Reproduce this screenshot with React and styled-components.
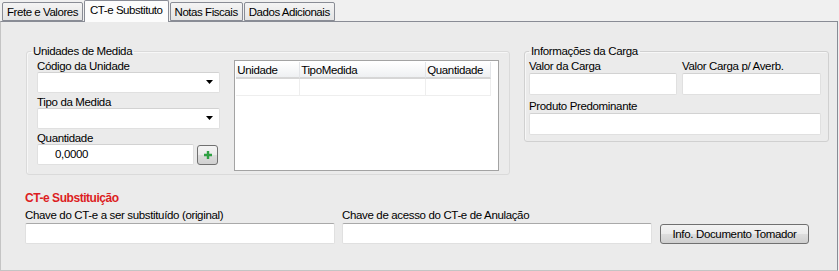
import React from "react";
import styled, { createGlobalStyle } from "styled-components";

const Global = createGlobalStyle`
  html, body { margin: 0; padding: 0; background: #f0f0f0; }
  body {
    font-family: "Liberation Sans", Arial, sans-serif;
    font-size: 11.5px;
    letter-spacing: -0.35px;
    color: #000;
  }
  * { box-sizing: border-box; }
`;

const Page = styled.div`
  width: 839px;
  height: 271px;
  overflow: hidden;
  display: flex;
  flex-direction: column;
`;

const TabBar = styled.div`
  display: flex;
  align-items: flex-start;
  gap: 1px;
  height: 21px;
  padding-left: 2px;
  position: relative;
  z-index: 2;
`;

const Tab = styled.div`
  margin-top: ${(p) => (p.$active ? 0 : 2)}px;
  height: ${(p) => (p.$active ? 22 : 19)}px;
  padding: 3px ${(p) => (p.$active ? 5 : 4)}px 0;
  line-height: 13px;
  letter-spacing: -0.45px;
  white-space: nowrap;
  border: 1px solid #898c95;
  border-bottom: ${(p) => (p.$active ? "none" : "1px solid #898c95")};
  border-radius: 2px 2px 0 0;
  background: ${(p) =>
    p.$active ? "#fcfcfc" : "linear-gradient(#f4f4f4, #e4e4e4)"};
`;

const Panel = styled.div`
  width: 838px;
  height: 250px;
  border: 1px solid #898c95;
  border-left-color: #c4c4c4;
  border-bottom-color: #c4c4c4;
  background: #ebebeb;
  padding: 22px 0 0 25px;
  position: relative;
  z-index: 1;
`;

const TopRow = styled.div`
  display: flex;
  align-items: flex-start;
  gap: 14px;
`;

const Group = styled.fieldset`
  margin: 0;
  width: ${(p) => p.$w}px;
  border: 1px solid ${(p) => (p.$faint ? "#dadada" : "#d0d0d0")};
  border-radius: 3px;
  box-shadow: inset 1px 1px 0 #f7f7f7;
  padding: ${(p) => p.$pad};
  min-inline-size: 0;
`;

const Legend = styled.legend`
  line-height: 14px;
  padding: 0 2px;
  margin-left: ${(p) => p.$shift}px;
`;

const LeftContent = styled.div`
  display: flex;
  align-items: flex-start;
  gap: 14px;
`;

const FieldStack = styled.div`
  display: flex;
  flex-direction: column;
  gap: ${(p) => p.$gap}px;
  width: ${(p) => (p.$w ? `${p.$w}px` : "auto")};
`;

const Field = styled.div`
  display: flex;
  flex-direction: column;
  gap: ${(p) => p.$gap || 0}px;
  width: ${(p) => (p.$w ? `${p.$w}px` : "auto")};
`;

const Label = styled.div`
  line-height: ${(p) => p.$lh || 12}px;
  height: ${(p) => p.$lh || 12}px;
  white-space: nowrap;
`;

const Input = styled.div`
  height: ${(p) => p.$h || 21}px;
  width: ${(p) => (p.$w ? `${p.$w}px` : "100%")};
  background: #fff;
  border: 1px solid #e0e0e0;
  border-top-color: ${(p) => (p.$edge ? "#a9a9a9" : "#d2d2d2")};
  border-radius: 2px;
  padding-left: ${(p) => p.$indent || 4}px;
  display: flex;
  align-items: center;
  line-height: 13px;
`;

const Select = styled(Input)`
  justify-content: flex-end;
  padding-right: 5px;
`;

const Row = styled.div`
  display: flex;
  align-items: flex-end;
  gap: ${(p) => p.$gap}px;
`;

const SmallButton = styled.button`
  width: 21px;
  height: 20px;
  padding: 0;
  border: 1px solid #707070;
  border-radius: 3px;
  background: linear-gradient(#f4f4f4 0%, #ebebeb 50%, #dcdcdc 51%, #d0d0d0 100%);
  display: flex;
  align-items: center;
  justify-content: center;
`;

const Table = styled.div`
  width: 266px;
  height: 111px;
  border: 1px solid #a3a3a3;
  padding: 1px;
  background: #fff;
  display: grid;
  grid-template-columns: 64px 126px 65px;
  grid-auto-rows: 17px;
  align-content: start;
`;

const HeadCell = styled.div`
  height: 17px;
  line-height: 17px;
  padding-left: 1px;
  background: linear-gradient(#ffffff 0%, #f7f8f9 50%, #eef0f2 100%);
  border-right: 1px solid #e3e5e8;
  border-bottom: 2px solid #d6d6d6;
  white-space: nowrap;
  overflow: hidden;
`;

const Cell = styled.div`
  border-right: 1px solid #eeeeee;
  border-bottom: 1px solid #eeeeee;
`;

const Bottom = styled.div`
  margin: 16px 0 0 -1px;
  display: flex;
  flex-direction: column;
`;

const Heading = styled.div`
  color: #dd1d22;
  font-weight: bold;
  font-size: 12px;
  letter-spacing: -0.45px;
  line-height: 14px;
  margin-bottom: 4px;
`;

const Button = styled.button`
  width: 149px;
  height: 20px;
  margin-left: 1px;
  padding: 0;
  border: 1px solid #707070;
  border-radius: 3px;
  background: linear-gradient(#f3f3f3 0%, #ebebeb 50%, #dddddd 51%, #cfcfcf 100%);
  font-family: "Liberation Sans", Arial, sans-serif;
  font-size: 11.5px;
  letter-spacing: -0.35px;
  color: #000;
  line-height: 18px;
`;

const Arrow = () => (
  <svg width="8" height="5" viewBox="0 0 8 5">
    <path d="M0 0 H7 L3.5 4 Z" fill="#000" />
  </svg>
);

const Plus = () => (
  <svg width="10" height="10" viewBox="0 0 10 10">
    <path d="M5 1 V9 M1 5 H9" stroke="#2fa043" strokeWidth="2.4" />
  </svg>
);

export default function App() {
  return (
    <Page>
      <Global />
      <TabBar>
        <Tab>Frete e Valores</Tab>
        <Tab $active>CT-e Substituto</Tab>
        <Tab>Notas Fiscais</Tab>
        <Tab>Dados Adicionais</Tab>
      </TabBar>
      <Panel>
        <TopRow>
          <Group $w={484} $faint $pad="2px 10px 3px 10px">
            <Legend $shift={-6}>Unidades de Medida</Legend>
            <LeftContent>
              <FieldStack $gap={3} $w={184}>
                <Field>
                  <Label>Código da Unidade</Label>
                  <Select>
                    <Arrow />
                  </Select>
                </Field>
                <Field>
                  <Label>Tipo da Medida</Label>
                  <Select>
                    <Arrow />
                  </Select>
                </Field>
                <Field>
                  <Label>Quantidade</Label>
                  <Row $gap={3}>
                    <Input $w={157} $indent={17}>0,0000</Input>
                    <SmallButton>
                      <Plus />
                    </SmallButton>
                  </Row>
                </Field>
              </FieldStack>
              <Table>
                <HeadCell>Unidade</HeadCell>
                <HeadCell>TipoMedida</HeadCell>
                <HeadCell>Quantidade</HeadCell>
                <Cell />
                <Cell />
                <Cell />
              </Table>
            </LeftContent>
          </Group>
          <Group $w={305} $pad="2px 7px 6px 4px">
            <Legend $shift={0}>Informações da Carga</Legend>
            <FieldStack $gap={5}>
              <Row $gap={5}>
                <Field $w={148}>
                  <Label $lh={13}>Valor da Carga</Label>
                  <Input $h={22} />
                </Field>
                <Field $w={139}>
                  <Label $lh={13}>Valor Carga p/ Averb.</Label>
                  <Input $h={22} />
                </Field>
              </Row>
              <Field>
                <Label $lh={13}>Produto Predominante</Label>
                <Input $h={22} />
              </Field>
            </FieldStack>
          </Group>
        </TopRow>
        <Bottom>
          <Heading>CT-e Substituição</Heading>
          <Row $gap={7}>
            <Field $w={310} $gap={1}>
              <Label $lh={13}>Chave do CT-e a ser substituído (original)</Label>
              <Input $edge />
            </Field>
            <Field $w={310} $gap={1}>
              <Label $lh={13}>Chave de acesso do CT-e de Anulação</Label>
              <Input $edge />
            </Field>
            <Button>Info. Documento Tomador</Button>
          </Row>
        </Bottom>
      </Panel>
    </Page>
  );
}
